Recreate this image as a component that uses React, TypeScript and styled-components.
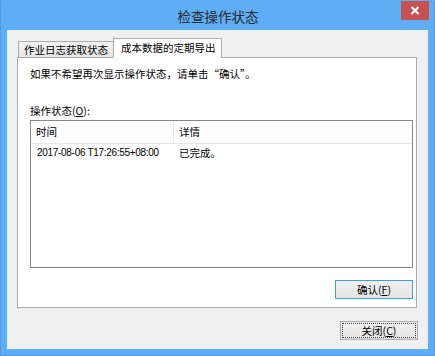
import React from 'react';
import styled, { createGlobalStyle } from 'styled-components';

const GlobalStyle = createGlobalStyle`
  html, body {
    margin: 0;
    padding: 0;
    background: #ffffff;
  }
  body {
    font-family: "Noto Sans CJK SC", "Liberation Sans", sans-serif;
  }
`

const cjk = `"Noto Sans CJK SC", "Liberation Sans", sans-serif`
const latin = `"Liberation Sans", "Noto Sans CJK SC", sans-serif`

interface DialogButtonProps {
  label: string;
  accel: string;
  isDefault?: boolean;
  focused?: boolean;
}

const DialogButton: React.FC<DialogButtonProps> = ({ label, accel, isDefault, focused }) => {
  return (
    <PushButton isDefault={isDefault} focused={focused}>
      {label}(<u>{accel}</u>)
    </PushButton>
  )
}

export default function App() {
  return (
    <>
      <GlobalStyle />
      <Frame>
        <TitleBar>
          <span />
          <Title>检查操作状态</Title>
          <CloseButton>
            <svg width="10" height="9" viewBox="0 0 10 9">
              <path d="M1.5 1 L8.5 8 M8.5 1 L1.5 8" stroke="#ffffff" strokeWidth="2" />
            </svg>
          </CloseButton>
        </TitleBar>
        <Client>
          <TabStrip>
            <Tab>作业日志获取状态</Tab>
            <Tab active>成本数据的定期导出</Tab>
          </TabStrip>
          <TabPanel>
            <Message>如果不希望再次显示操作状态，请单击“确认”。</Message>
            <FieldLabel>操作状态(<u>O</u>):</FieldLabel>
            <ListView>
              <HeaderRow>
                <HeaderCell width={143}>时间</HeaderCell>
                <HeaderCell>详情</HeaderCell>
              </HeaderRow>
              <Row>
                <TimeCell>2017-08-06 T17:26:55+08:00</TimeCell>
                <DetailCell>已完成。</DetailCell>
              </Row>
            </ListView>
            <PanelFooter>
              <DialogButton label="确认" accel="F" isDefault />
            </PanelFooter>
          </TabPanel>
          <DialogFooter>
            <DialogButton label="关闭" accel="C" focused />
          </DialogFooter>
        </Client>
      </Frame>
    </>
  )
}

const Frame = styled.div`
  width: 435px;
  height: 356px;
  box-sizing: border-box;
  background: #5faef5;
  border: 1px solid #4c9be6;
  border-top-color: #5faef5;
  padding: 0 6px 6px 6px;
  display: flex;
  flex-direction: column;
`

const TitleBar = styled.div`
  height: 29px;
  display: grid;
  grid-template-columns: 1fr auto 1fr;
  align-items: start;
  margin-right: -1px;
`

const Title = styled.div`
  font-family: ${cjk};
  font-size: 13.5px;
  line-height: 16px;
  color: #2b2b2b;
  padding-top: 7px;
`

const CloseButton = styled.div`
  justify-self: end;
  width: 28px;
  height: 19px;
  background: #c75050;
  display: flex;
  align-items: center;
  justify-content: center;
`

const Client = styled.div`
  flex: 1;
  background: #f0f0f0;
  display: flex;
  flex-direction: column;
  padding-top: 8px;
  box-sizing: border-box;
`

const TabStrip = styled.div`
  display: flex;
  align-items: flex-end;
  padding-left: 11px;
  position: relative;
  z-index: 1;
  margin-bottom: -1px;
`

const Tab = styled.div<{ active?: boolean }>`
  font-family: ${cjk};
  font-size: 10.5px;
  line-height: 14px;
  color: #000;
  box-sizing: border-box;
  border: 1px solid #acacac;
  border-bottom: ${p => p.active ? 'none' : '1px solid #acacac'};
  background: ${p => p.active ? '#ffffff' : 'linear-gradient(#f2f2f2, #e6e6e6)'};
  height: ${p => p.active ? '20px' : '17px'};
  padding: ${p => p.active ? '2px 7px 0 7px' : '1px 5px 0 5px'};
  width: ${p => p.active ? '109px' : '97px'};
  margin-left: ${p => p.active ? '-2px' : '0'};
  white-space: nowrap;
  overflow: hidden;
`

const TabPanel = styled.div`
  margin: 0 11px 0 10px;
  height: 251px;
  box-sizing: border-box;
  background: #ffffff;
  border: 1px solid #acacac;
  padding: 8px 3px 0 12px;
  display: flex;
  flex-direction: column;
`

const Message = styled.div`
  font-family: ${cjk};
  font-size: 10.5px;
  line-height: 16px;
  color: #000;
`

const FieldLabel = styled.div`
  font-family: ${cjk};
  font-size: 10.5px;
  line-height: 16px;
  color: #000;
  margin-top: 21px;
  margin-bottom: 1px;
`

const ListView = styled.div`
  height: 148px;
  box-sizing: border-box;
  border: 1px solid #828790;
  background: #ffffff;
  display: flex;
  flex-direction: column;
`

const HeaderRow = styled.div`
  height: 22px;
  display: flex;
  border-bottom: 1px solid #e3e9ef;
  background: linear-gradient(#ffffff, #fbfbfb);
`

const HeaderCell = styled.div<{ width?: number }>`
  font-family: ${cjk};
  font-size: 10.5px;
  line-height: 21px;
  color: #000;
  padding-left: 5px;
  box-sizing: border-box;
  width: ${p => p.width ? `${p.width}px` : 'auto'};
  flex: ${p => p.width ? 'none' : '1'};
  border-right: ${p => p.width ? '1px solid #e3e5e8' : 'none'};
`

const Row = styled.div`
  height: 17px;
  display: flex;
  align-items: center;
`

const TimeCell = styled.div`
  font-family: ${latin};
  font-size: 10px;
  letter-spacing: -0.3px;
  color: #000;
  width: 143px;
  padding-left: 6px;
  box-sizing: border-box;
  white-space: nowrap;
`

const DetailCell = styled.div`
  font-family: ${cjk};
  font-size: 10.5px;
  color: #000;
  padding-left: 5px;
`

const PanelFooter = styled.div`
  display: flex;
  justify-content: flex-end;
  margin-top: 12px;
`

const DialogFooter = styled.div`
  display: flex;
  justify-content: flex-end;
  margin-top: 13px;
  padding-right: 10px;
`

const PushButton = styled.div<{ isDefault?: boolean; focused?: boolean }>`
  width: 78px;
  height: 19px;
  box-sizing: border-box;
  border: 1px solid ${p => p.isDefault ? '#3c9cf0' : '#acacac'};
  background: linear-gradient(#f0f0f0, #e5e5e5);
  font-family: ${cjk};
  font-size: 10.5px;
  line-height: 17px;
  color: #000;
  text-align: center;
  outline: ${p => p.focused ? '1px dotted #404040' : 'none'};
  outline-offset: -3px;
  u {
    text-decoration: underline;
  }
`
